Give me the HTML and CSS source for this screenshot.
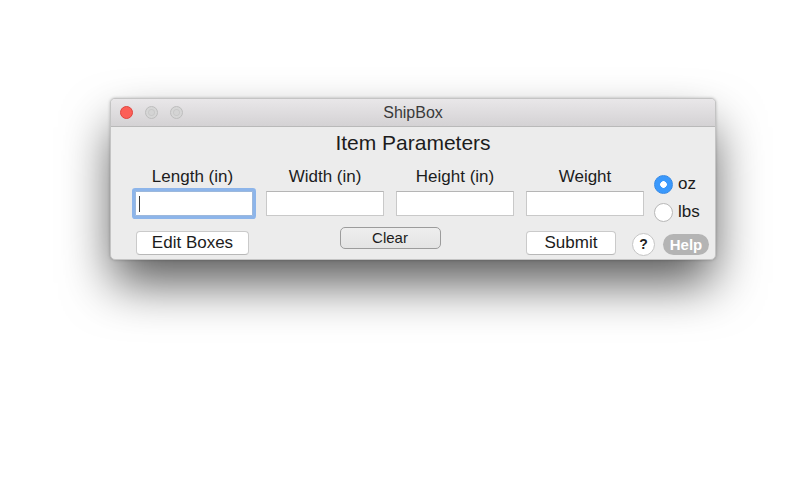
FILE: index.html
```html
<!DOCTYPE html>
<html>
<head>
<meta charset="utf-8">
<link rel="stylesheet" href="styles.css">
</head>
<body>
<div class="window">
  <div class="titlebar">
    <div class="lights">
      <span class="light red"></span>
      <span class="light gray"></span>
      <span class="light gray"></span>
    </div>
    <div class="title">ShipBox</div>
  </div>
  <div class="content">
    <div class="heading">Item Parameters</div>
    <div class="form">
      <div class="label">Length (in)</div>
      <div class="label">Width (in)</div>
      <div class="label">Height (in)</div>
      <div class="label">Weight</div>
      <div class="radios">
        <div class="radio-row"><span class="radio on"></span><span class="rlabel">oz</span></div>
        <div class="radio-row"><span class="radio"></span><span class="rlabel">lbs</span></div>
      </div>
      <div class="field focused"><span class="caret"></span></div>
      <div class="field"></div>
      <div class="field"></div>
      <div class="field"></div>
      <div class="btn-cell edit"><div class="btn">Edit Boxes</div></div>
      <div class="btn-cell clear"><div class="btn-clear">Clear</div></div>
      <div class="btn-cell right">
        <div class="btn submit">Submit</div>
        <div class="qmark">?</div>
        <div class="help">Help</div>
      </div>
    </div>
  </div>
</div>
</body>
</html>
```

FILE: styles.css
```css
html, body {
  margin: 0;
  padding: 0;
  background: #ffffff;
}
body {
  padding: 98px 0 0 110px;
  min-height: 100vh;
  box-sizing: border-box;
  font-family: "Liberation Sans", Arial, sans-serif;
  color: #1a1a1a;
}
.window {
  width: 606px;
  height: 162px;
  box-sizing: border-box;
  background: #ececec;
  border: 1px solid #c4c4c4;
  border-radius: 5px;
  box-shadow: 0 26px 50px -3px rgba(0, 0, 0, 0.66), 0 0 3px rgba(0,0,0,0.25);
  overflow: hidden;
}
.titlebar {
  height: 27px;
  background: linear-gradient(#e9e7e9, #d4d2d4);
  border-bottom: 1px solid #b9b9b9;
  display: flex;
  align-items: center;
  position: relative;
}
.lights {
  display: flex;
  gap: 12px;
  padding-left: 9px;
}
.light {
  width: 13px;
  height: 13px;
  border-radius: 50%;
  box-sizing: border-box;
}
.light.red {
  background: #fc5f57;
  border: 1px solid #e0443e;
}
.light.gray {
  background: radial-gradient(circle, #d4d4d4 0 2px, #c9c9c9 3px, #d6d6d6 4px);
  border: 1px solid #bdbdbd;
}
.title {
  position: absolute;
  left: 0;
  right: 0;
  top: 0;
  line-height: 27px;
  text-align: center;
  font-size: 16px;
  color: #3a3a3a;
  pointer-events: none;
}
.heading {
  text-align: center;
  font-size: 21px;
  line-height: 24px;
  margin-top: 4px;
  color: #1c1c1c;
}
.form {
  display: grid;
  grid-template-columns: 118px 118px 118px 118px auto;
  grid-template-rows: 20px 29px auto;
  column-gap: 12px;
  padding-left: 25px;
  margin-top: 12px;
}
.label {
  text-align: center;
  font-size: 17px;
  line-height: 20px;
  color: #1c1c1c;
}
.label:first-child {
  margin-left: -5px;
}
.radios {
  grid-column: 5;
  grid-row: 1 / span 2;
  padding-top: 8px;
  margin-left: -2px;
  display: flex;
  flex-direction: column;
  gap: 10px;
}
.radio-row {
  display: flex;
  align-items: center;
  gap: 5px;
  height: 18px;
}
.radio {
  width: 19px;
  height: 19px;
  border-radius: 50%;
  box-sizing: border-box;
  background: #ffffff;
  border: 1px solid #b8b8b8;
  display: inline-block;
}
.radio.on {
  background: radial-gradient(circle, #ffffff 0 3px, #3b99fc 3.6px);
  border: 1px solid #3589e6;
}
.rlabel {
  font-size: 17px;
  color: #1c1c1c;
}
.field {
  margin-top: 4px;
  height: 25px;
  box-sizing: border-box;
  background: #ffffff;
  border: 1px solid #c9c9c9;
  border-top-color: #b5b5b5;
}
.field.focused {
  border: 1px solid #9cb8dc;
  box-shadow: 0 0 0 3px #8db5ea;
  border-radius: 1px;
  margin-left: -1px;
  margin-right: 1px;
  display: flex;
  align-items: center;
  padding-left: 3px;
}
.caret {
  width: 1px;
  height: 16px;
  background: #3a3a3a;
}
.btn-cell {
  grid-row: 3;
  margin-top: 11px;
}
.btn-cell.edit {
  grid-column: 1;
  padding-top: 4px;
}
.btn-cell.clear {
  grid-column: 2 / span 2;
  display: flex;
  justify-content: center;
}
.btn-cell.right {
  grid-column: 4 / span 2;
  display: flex;
  align-items: flex-start;
  padding-top: 4px;
}
.btn {
  width: 113px;
  height: 24px;
  box-sizing: border-box;
  background: #ffffff;
  border: 1px solid #cacaca;
  border-bottom-color: #b8b8b8;
  border-radius: 4px;
  text-align: center;
  font-size: 17px;
  line-height: 22px;
  color: #1c1c1c;
}
.btn.submit {
  width: 90px;
}
.btn-clear {
  width: 101px;
  height: 22px;
  box-sizing: border-box;
  background: linear-gradient(#eeeeee, #e4e4e4);
  border: 1px solid #9c9c9c;
  border-radius: 5px;
  text-align: center;
  font-size: 15px;
  line-height: 20px;
  color: #1c1c1c;
}
.qmark {
  margin-left: 16px;
  margin-top: 2px;
  width: 23px;
  height: 23px;
  box-sizing: border-box;
  border-radius: 50%;
  background: #ffffff;
  border: 1px solid #c4c4c4;
  text-align: center;
  font-size: 14px;
  font-weight: bold;
  line-height: 21px;
  color: #222;
}
.help {
  margin-left: 8px;
  margin-top: 3px;
  width: 46px;
  height: 21px;
  border-radius: 11px;
  background: #b4b4b4;
  color: #ffffff;
  font-weight: bold;
  font-size: 15px;
  line-height: 21px;
  text-align: center;
}
```
